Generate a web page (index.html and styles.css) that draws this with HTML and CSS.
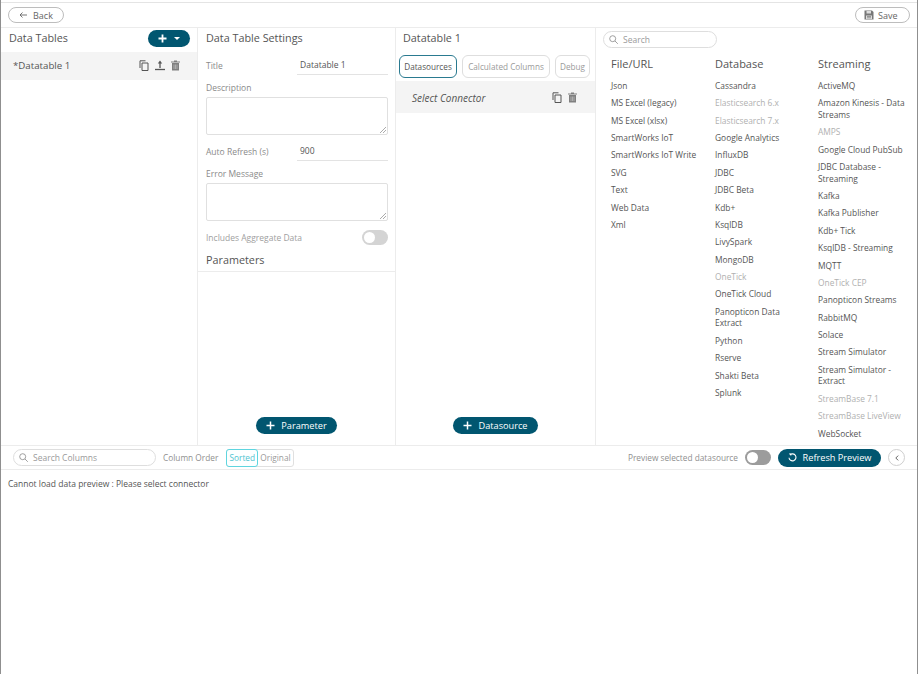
FILE: index.html
```html
<!DOCTYPE html>
<html lang="en">
<head>
<meta charset="utf-8">
<title>Data Table</title>
<link rel="stylesheet" href="styles.css">
</head>
<body>
<div class="app">
  <header class="topbar">
    <button class="ghost-btn back"><svg width="8" height="8" viewBox="0 0 8 8"><path d="M8 4H1M3.500 1.500L1 4l2.500 2.500" fill="none" stroke="#666" stroke-width=".9"/></svg>Back</button>
    <button class="ghost-btn save"><svg width="10" height="10" viewBox="0 0 10 10"><path d="M0.500 0.500h7.500l1.500 1.500v7.500h-9z" fill="#777"/><path d="M2.500 1h4.500v2.500h-4.500zM2 5.500h6v3.500h-6z" fill="#ddd"/><path d="M3 6.500h4M3 7.800h4" stroke="#777" stroke-width=".7"/></svg>Save</button>
  </header>
  <main class="panels">
    <section class="panel tables">
      <div class="panel-head">
        <h2>Data Tables</h2>
        <button class="pill add-menu"><svg width="9" height="9" viewBox="0 0 9 9"><path d="M4.500 0.500v8M0.500 4.500h8" stroke="#fff" stroke-width="1.800"/></svg><svg width="6" height="3" viewBox="0 0 6 3"><path d="M0 0h6L3 3z" fill="#fff"/></svg></button>
      </div>
      <div class="row table-row">
        <span>*Datatable 1</span>
        <div class="icons">
          <svg width="10" height="11" viewBox="0 0 10 11"><path d="M3 3h6v7.500H3zM1 8V.8h5.500" fill="none" stroke="#555" stroke-width="1"/></svg>
          <svg width="10" height="11" viewBox="0 0 10 11"><path d="M5 8V2" fill="none" stroke="#555" stroke-width="1.300"/><path d="M5 .5L7.200 3.500H2.800z" fill="#555"/><path d="M0 9.500h10" stroke="#555" stroke-width="1.300"/></svg>
          <svg width="9" height="11" viewBox="0 0 9 11"><path d="M1 3h7v7.500H1zM0 1.500h9v1H0zM3 .5h3v1H3z" fill="#808080"/><path d="M3 4.500v4.500M4.500 4.500v4.500M6 4.500v4.500" stroke="#ccc" stroke-width=".6"/></svg>
        </div>
      </div>
    </section>
    <section class="panel settings">
      <h2 class="settings-title">Data Table Settings</h2>
      <div class="field-inline">
        <label>Title</label>
        <div class="value">Datatable 1</div>
      </div>
      <label class="field-label">Description</label>
      <div class="textarea"><svg class="grip" width="6" height="6" viewBox="0 0 6 6"><path d="M0 6L6 0M3 6L6 3" stroke="#888" stroke-width=".7"/></svg></div>
      <div class="field-inline refresh">
        <label>Auto Refresh (s)</label>
        <div class="value">900</div>
      </div>
      <label class="field-label">Error Message</label>
      <div class="textarea"><svg class="grip" width="6" height="6" viewBox="0 0 6 6"><path d="M0 6L6 0M3 6L6 3" stroke="#888" stroke-width=".7"/></svg></div>
      <div class="toggle-row">
        <label>Includes Aggregate Data</label>
        <span class="toggle light"></span>
      </div>
      <h2 class="params-title">Parameters</h2>
      <div class="panel-foot">
        <button class="pill action"><svg width="9" height="9" viewBox="0 0 9 9"><path d="M4.500 0.500v8M0.500 4.500h8" stroke="#fff" stroke-width="1.500"/></svg>Parameter</button>
      </div>
    </section>
    <section class="panel sources">
      <h2 class="sources-title">Datatable 1</h2>
      <div class="tabs">
        <button class="tab active">Datasources</button>
        <button class="tab calc">Calculated Columns</button>
        <button class="tab debug">Debug</button>
      </div>
      <div class="row connector-row">
        <em>Select Connector</em>
        <div class="icons">
          <svg width="10" height="11" viewBox="0 0 10 11"><path d="M3 3h6v7.500H3zM1 8V.8h5.500" fill="none" stroke="#555" stroke-width="1"/></svg>
          <svg width="9" height="11" viewBox="0 0 9 11"><path d="M1 3h7v7.500H1zM0 1.500h9v1H0zM3 .5h3v1H3z" fill="#808080"/><path d="M3 4.500v4.500M4.500 4.500v4.500M6 4.500v4.500" stroke="#ccc" stroke-width=".6"/></svg>
        </div>
      </div>
      <div class="panel-foot">
        <button class="pill action"><svg width="9" height="9" viewBox="0 0 9 9"><path d="M4.500 0.500v8M0.500 4.500h8" stroke="#fff" stroke-width="1.500"/></svg>Datasource</button>
      </div>
    </section>
    <section class="panel catalog">
      <div class="search catalog-search"><svg width="9" height="9" viewBox="0 0 9 9"><circle cx="3.700" cy="3.700" r="3" fill="none" stroke="#888" stroke-width=".8"/><path d="M6 6l2.800 2.800" stroke="#888" stroke-width=".8"/></svg><span>Search</span></div>
      <div class="catalog-cols">
        <div class="cat-col file">
          <h3>File/URL</h3>
          <ul>
            <li>Json</li><li>MS Excel (legacy)</li><li>MS Excel (xlsx)</li><li>SmartWorks IoT</li><li>SmartWorks IoT Write</li><li>SVG</li><li>Text</li><li>Web Data</li><li>Xml</li>
          </ul>
        </div>
        <div class="cat-col db">
          <h3>Database</h3>
          <ul>
            <li>Cassandra</li><li class="off">Elasticsearch 6.x</li><li class="off">Elasticsearch 7.x</li><li>Google Analytics</li><li>InfluxDB</li><li>JDBC</li><li>JDBC Beta</li><li>Kdb+</li><li>KsqlDB</li><li>LivySpark</li><li>MongoDB</li><li class="off">OneTick</li><li>OneTick Cloud</li><li>Panopticon Data Extract</li><li>Python</li><li>Rserve</li><li>Shakti Beta</li><li>Splunk</li>
          </ul>
        </div>
        <div class="cat-col stream">
          <h3>Streaming</h3>
          <ul>
            <li>ActiveMQ</li><li>Amazon Kinesis - Data Streams</li><li class="off">AMPS</li><li>Google Cloud PubSub</li><li>JDBC Database - Streaming</li><li>Kafka</li><li>Kafka Publisher</li><li>Kdb+ Tick</li><li>KsqlDB - Streaming</li><li>MQTT</li><li class="off">OneTick CEP</li><li>Panopticon Streams</li><li>RabbitMQ</li><li>Solace</li><li>Stream Simulator</li><li>Stream Simulator - Extract</li><li class="off">StreamBase 7.1</li><li class="off">StreamBase LiveView</li><li>WebSocket</li>
          </ul>
        </div>
      </div>
    </section>
  </main>
  <div class="toolbar">
    <div class="search col-search"><svg width="9" height="9" viewBox="0 0 9 9"><circle cx="3.700" cy="3.700" r="3" fill="none" stroke="#888" stroke-width=".8"/><path d="M6 6l2.800 2.800" stroke="#888" stroke-width=".8"/></svg><span>Search Columns</span></div>
    <span class="muted order-label">Column Order</span>
    <div class="segment"><span class="seg on">Sorted</span><span class="seg">Original</span></div>
    <div class="toolbar-right">
      <span class="muted">Preview selected datasource</span>
      <span class="toggle dark"></span>
      <button class="pill refresh-btn"><svg width="9" height="9" viewBox="0 0 9 9"><path d="M2 1.900A3.500 3.500 0 1 1 1 4.700" fill="none" stroke="#fff" stroke-width="1.100"/><path d="M.8 .6h2.400v2.400z" fill="#fff"/></svg>Refresh Preview</button>
      <button class="round-btn"><svg width="4" height="6" viewBox="0 0 4 6"><path d="M3.200 .6L.8 3l2.400 2.400" fill="none" stroke="#555" stroke-width=".9"/></svg></button>
    </div>
  </div>
  <p class="status">Cannot load data preview : Please select connector</p>
</div>
</body>
</html>
```

FILE: styles.css
```css
* { box-sizing: border-box; }
html, body { margin: 0; height: 100%; }
body { background: #fff; font-family: "Open Sans", sans-serif; color: #555; overflow: hidden; }
button { font-family: inherit; cursor: pointer; }
h2, h3, p, ul { margin: 0; padding: 0; }
ul { list-style: none; }

.app { width: 918px; height: 674px; display: flex; flex-direction: column; border-left: 1px solid #8f8f8f; border-right: 1px solid #8f8f8f; padding-top: 2px; }

.topbar { height: 26px; flex: none; display: flex; justify-content: space-between; align-items: center; padding: 0 7px 0 7px; border-top: 1px solid #e4e4e4; border-bottom: 1px solid #ececec; }
.ghost-btn { height: 16px; display: flex; align-items: center; border: 1px solid #bdbdbd; border-radius: 8px; background: #fff; color: #666; font-size: 9px; padding: 0; }
.back { width: 56px; gap: 6px; padding-left: 10px; }
.save { width: 55px; gap: 4px; padding-left: 8px; }

.panels { height: 418px; flex: none; display: flex; border-bottom: 1px solid #ececec; }
.panel { height: 100%; position: relative; border-right: 1px solid #ececec; display: flex; flex-direction: column; }
.tables { width: 197px; }
.settings { width: 198px; padding: 0 7px 0 8px; }
.sources { width: 200px; }
.catalog { flex: 1; border-right: 0; padding: 3px 0 0 7px; }

h2 { font-size: 10.800px; font-weight: 400; color: #555; line-height: 16px; }

.panel-head { height: 24px; display: flex; justify-content: space-between; align-items: flex-start; padding: 2px 7px 0 8px; }
.pill { border: 0; background: #015670; color: #fff; border-radius: 9px; display: flex; align-items: center; justify-content: center; }
.add-menu { width: 42px; height: 17px; gap: 7px; }

.row { display: flex; align-items: center; justify-content: space-between; background: #f4f4f4; }
.table-row { height: 28px; font-size: 9.700px; padding: 0 17px 2px 12px; color: #555; }
.icons { display: flex; gap: 6px; align-items: center; }

.settings-title { margin-top: 2px; height: 22px; }
.field-inline { display: flex; align-items: center; height: 24px; margin-top: 1px; }
.field-inline label { width: 91px; flex: none; font-size: 8.500px; color: #8a8a8a; }
.value { flex: 1; height: 19px; line-height: 18px; font-size: 8.500px; color: #555; padding-left: 3px; border-bottom: 1px solid #e3e3e3; margin-top: 1px; }
.field-label { display: block; font-size: 8.500px; color: #8a8a8a; line-height: 12px; margin-top: 5px; }
.textarea { height: 38px; margin-top: 3px; border: 1px solid #e0e0e0; border-radius: 2px; position: relative; background: #fff; }
.grip { position: absolute; right: 1px; bottom: 1px; }
.refresh { margin-top: 4px; }
.toggle-row { display: flex; justify-content: space-between; align-items: center; margin-top: 8px; height: 16px; }
.toggle-row label { font-size: 8.500px; color: #a0a0a0; }
.toggle { display: block; width: 26px; height: 15px; border-radius: 8px; position: relative; flex: none; }
.toggle::after { content: ""; position: absolute; left: 2px; top: 2px; width: 11px; height: 11px; border-radius: 50%; background: #fff; }
.toggle.light { background: #d4d4d4; }
.toggle.dark { background: #9c9c9c; }
.params-title { margin: 5px -7px 0 -8px; padding: 0 8px; height: 22px; line-height: 20px; border-bottom: 1px solid #ececec; }
.panel-foot { position: absolute; left: 0; right: 0; bottom: 11px; display: flex; justify-content: center; }
.action { height: 17px; font-size: 9.200px; font-weight: 500; gap: 6px; }
.settings .action { width: 81px; }
.sources .action { width: 85px; }

.sources-title { padding: 2px 0 0 7px; height: 24px; }
.tabs { display: flex; gap: 5px; padding: 3px 5px 0 3px; height: 26px; }
.tab { height: 23px; border: 1px solid #dedede; border-radius: 6px; background: #fff; font-size: 8.200px; color: #9a9a9a; padding: 0; white-space: nowrap; overflow: hidden; }
.tab.active { width: 58px; border-color: #2a7a90; color: #555; }
.tab.calc { width: 88px; }
.tab.debug { width: 35px; }
.connector-row { height: 32px; margin-top: 3px; padding: 0 18px 0 16px; font-size: 10px; }
.connector-row em { color: #555; margin-top: 2px; }

.search { display: flex; align-items: center; border: 1px solid #dedede; border-radius: 9px; height: 17px; font-size: 8.500px; color: #9a9a9a; gap: 5px; padding-left: 5px; }
.catalog-search { width: 114px; }
.col-search { width: 143px; flex: none; }
.catalog-cols { display: grid; grid-template-columns: 104px 103px 1fr; padding: 3px 0 0 8px; }
.cat-col h3 { font-size: 11px; font-weight: 400; color: #555; line-height: 18px; margin-top: 4px; margin-bottom: 7px; }
.cat-col li { font-size: 8.400px; line-height: 11.600px; padding-bottom: 5.800px; color: #555; padding-right: 10px; }
.cat-col li.off { color: #b0b0b0; }

.toolbar { height: 24px; flex: none; display: flex; align-items: center; padding: 0 12px; border-bottom: 1px solid #ececec; font-size: 8.500px; }
.muted { color: #8f8f8f; font-size: 8.300px; }
.order-label { margin-left: 7px; }
.segment { display: flex; margin-left: 8px; height: 18px; border: 1px solid #e0e0e0; border-radius: 3px; }
.seg { padding: 0 1px; line-height: 16px; font-size: 8.300px; color: #9a9a9a; border: 1px solid transparent; margin: -1px 0; height: 18px; white-space: nowrap; }
.seg.on { color: #4fc3cf; border-color: #5fd5df; border-radius: 3px; background: #fdffff; margin-left: -1px; width: 32px; text-align: center; }
.toolbar-right { margin-left: auto; display: flex; align-items: center; }
.toolbar-right .toggle { margin-left: 7px; }
.refresh-btn { width: 103px; height: 18px; margin-left: 7px; font-size: 9.200px; font-weight: 500; gap: 6px; }
.round-btn { width: 17px; height: 17px; border-radius: 50%; margin-left: 7px; border: 1px solid #cfcfcf; background: #fff; display: flex; align-items: center; justify-content: center; padding: 0; }

.status { font-size: 8.500px; color: #555; padding: 8px 0 0 7px; line-height: 12px; }
```
